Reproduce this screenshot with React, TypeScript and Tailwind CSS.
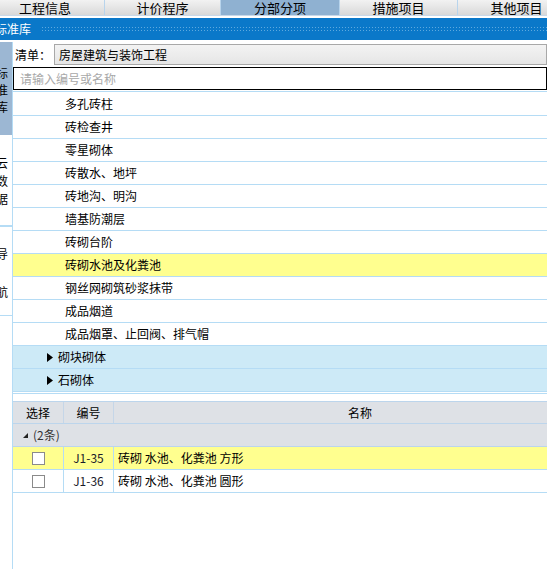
import React from 'react';

const FONT = "font-['Noto_Sans_CJK_SC',sans-serif]";

const TABS = [
  { label: '工程信息', w: 'w-[119px] ml-[-14px]' },
  { label: '计价程序', w: 'w-[116px]' },
  { label: '分部分项', w: 'w-[119px]', active: true },
  { label: '措施项目', w: 'w-[118px]' },
  { label: '其他项目', w: 'w-[118px]' },
];

const TREE = [
  { name: '多孔砖柱' },
  { name: '砖检查井' },
  { name: '零星砌体' },
  { name: '砖散水、地坪' },
  { name: '砖地沟、明沟' },
  { name: '墙基防潮层' },
  { name: '砖砌台阶' },
  { name: '砖砌水池及化粪池', selected: true },
  { name: '钢丝网砌筑砂浆抹带' },
  { name: '成品烟道' },
  { name: '成品烟罩、止回阀、排气帽' },
  { name: '砌块砌体', group: true },
  { name: '石砌体', group: true },
];

const ROWS = [
  { code: 'J1-35', name: '砖砌 水池、化粪池 方形', selected: true },
  { code: 'J1-36', name: '砖砌 水池、化粪池 圆形' },
];

function Caret() {
  return (
    <svg width="6" height="9" viewBox="0 0 6 9" className="shrink-0">
      <path d="M0 0 L6 4.5 L0 9 Z" fill="#000" />
    </svg>
  );
}

export default function App() {
  return (
    <div className={`w-[547px] h-[569px] overflow-hidden bg-white flex flex-col text-black ${FONT}`}>
      {/* top tabs */}
      <div className="flex h-[16px] shrink-0 border-b border-[#c8d8e8] overflow-hidden">
        {TABS.map((t) => (
          <div
            key={t.label}
            className={`${t.w} shrink-0 h-full flex items-center justify-center border-r border-[#b8d4ec] text-[13px] leading-[15px] ${
              t.active ? 'bg-[#8fb1d1]' : 'bg-gradient-to-b from-[#f2f2f2] to-[#d9d9d9]'
            }`}
          >
            {t.label}
          </div>
        ))}
      </div>

      {/* blue title bar */}
      <div className="mt-[2px] h-[22px] shrink-0 bg-[#0a78c9] flex items-center">
        <span className="ml-[-5px] text-white text-[12px] leading-none whitespace-nowrap">标准库</span>
        <div className="ml-[10px] flex-1 h-[6px] bg-[radial-gradient(circle,#5ea9de_0.7px,transparent_0.9px)] bg-[length:3px_3px]" />
      </div>

      <div className="flex flex-1 min-h-0 mt-[2px]">
        {/* side strip */}
        <div className="w-[13px] shrink-0 border-r border-[#b5dcf5] flex flex-col text-[12px] leading-none overflow-hidden">
          <div className="w-[12px] h-[93px] bg-[#9cb7d3] flex flex-col items-start pt-[25px] gap-[5px]">
            <span className="ml-[-4px]">标</span>
            <span className="ml-[-4px]">准</span>
            <span className="ml-[-4px]">库</span>
          </div>
          <div className="w-[12px] h-[90px] flex flex-col pt-[22px] gap-[6px]">
            <span className="ml-[-4px]">云</span>
            <span className="ml-[-4px]">数</span>
            <span className="ml-[-4px]">据</span>
          </div>
          <div className="w-[12px] h-[2px] bg-[#b5dcf5]" />
          <div className="w-[12px] h-[88px] flex flex-col pt-[21px] gap-[26px]">
            <span className="ml-[-4px]">导</span>
            <span className="ml-[-4px]">航</span>
          </div>
          <div className="w-[12px] h-[1px] bg-[#b5dcf5]" />
        </div>

        {/* main */}
        <div className="flex-1 min-w-0 flex flex-col">
          <div className="h-[24px] shrink-0 flex items-center pt-[1px]">
            <span className="ml-[2px] w-[39px] text-[12px]">清单：</span>
            <div className="flex-1 h-[21px] border border-[#a8a8a8] bg-gradient-to-b from-[#f3f3f3] to-[#e6e6e6] flex items-center pl-[4px] text-[12px]">
              房屋建筑与装饰工程
            </div>
          </div>
          <div className="mt-[1px] h-[23px] shrink-0 border border-black flex items-center pl-[6px] text-[12px] text-[#a8a8a8]">
            请输入编号或名称
          </div>

          <div className="mt-[1px] border-t border-[#b5dcf5] pt-[1px] shrink-0">
            {TREE.map((r) => (
              <div
                key={r.name}
                className={`h-[23px] border-b border-[#b5dcf5] flex items-center text-[12px] ${
                  r.selected ? 'bg-[#ffff8f]' : r.group ? 'bg-[#cdeaf7]' : 'bg-white'
                }`}
              >
                {r.group ? (
                  <div className="flex items-center gap-[5px] pl-[34px]">
                    <Caret />
                    <span>{r.name}</span>
                  </div>
                ) : (
                  <span className="pl-[52px]">{r.name}</span>
                )}
              </div>
            ))}
            <div className="h-[1px] mt-[1px] bg-[#b5dcf5]" />
          </div>

          {/* result table */}
          <div className="mt-[7px] shrink-0 text-[12px]">
            <div className="h-[23px] flex bg-[#dee1e6] border-t border-b border-[#bcd5ec]">
              <div className="w-[51px] border-r border-[#c5d6e8] flex items-center justify-center">选择</div>
              <div className="w-[50px] border-r border-[#c5d6e8] flex items-center justify-center">编号</div>
              <div className="flex-1 flex items-center pl-[234px]">名称</div>
            </div>
            <div className="h-[23px] flex items-center bg-[#dee1e6] border-b border-[#bcd5ec] pl-[10px] gap-[5px] text-[#333]">
              <svg width="5" height="5" viewBox="0 0 5 5">
                <path d="M5 0 L5 5 L0 5 Z" fill="#222" />
              </svg>
              <span>(2条)</span>
            </div>
            {ROWS.map((r) => (
              <div
                key={r.code}
                className={`h-[23px] flex border-b border-[#b5dcf5] ${r.selected ? 'bg-[#ffff8f]' : 'bg-white'}`}
              >
                <div className="w-[51px] border-r border-[#b5dcf5] flex items-center justify-center">
                  <div className="w-[13px] h-[13px] border border-[#8a8a8a] bg-white ml-[1px]" />
                </div>
                <div className="w-[50px] border-r border-[#b5dcf5] flex items-center justify-center text-[#1a1a2a]">
                  {r.code}
                </div>
                <div className="flex-1 flex items-center pl-[4px] whitespace-pre">{r.name}</div>
              </div>
            ))}
          </div>
        </div>
      </div>
    </div>
  );
}
